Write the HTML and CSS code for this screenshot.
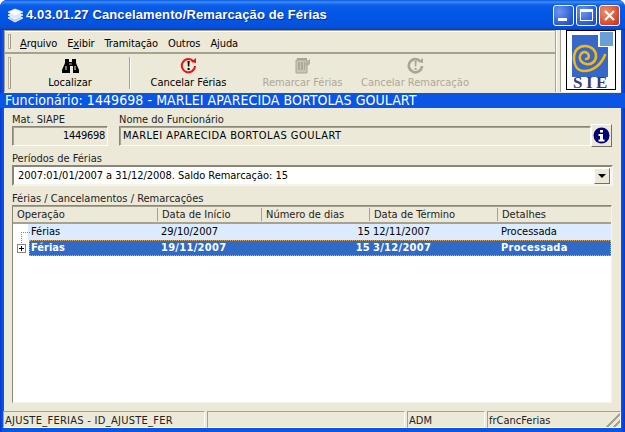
FILE: index.html
```html
<!DOCTYPE html>
<html lang="pt">
<head>
<meta charset="utf-8">
<title>Cancelamento/Remarcação de Férias</title>
<link rel="stylesheet" href="styles.css">
</head>
<body>
<div class="window">
  <header class="titlebar">
    <svg class="app-icon" width="17" height="15" viewBox="0 0 17 15">
      <path d="M1 10l7-3 8 3-8 4z" fill="#b9cfee" stroke="#fff" stroke-width=".8"/>
      <path d="M1 7l7-3 8 3-8 4z" fill="#dbe7f7" stroke="#fff" stroke-width=".8"/>
      <path d="M1 4l7-3 8 3-8 4z" fill="#fff" stroke="#dce8f8" stroke-width=".8"/>
    </svg>
    <span class="title-text">4.03.01.27 Cancelamento/Remarcação de Férias</span>
    <div class="caption-buttons">
      <span class="cap cap-blue"><i class="glyph-min"></i></span>
      <span class="cap cap-blue"><i class="glyph-max"></i></span>
      <span class="cap cap-red">
        <svg width="13" height="13" viewBox="0 0 13 13"><path d="M2 2l9 9M11 2l-9 9" stroke="#fff" stroke-width="2.2"/></svg>
      </span>
    </div>
  </header>

  <div class="client">
    <div class="top">
      <div class="bars">
        <nav class="menubar">
          <span class="grip"></span>
          <span class="menu"><u>A</u>rquivo</span>
          <span class="menu">E<u>x</u>ibir</span>
          <span class="menu">Tramitação</span>
          <span class="menu">Outros</span>
          <span class="menu">A<u>j</u>uda</span>
        </nav>
        <div class="toolbar">
          <span class="grip grip-tall"></span>
          <div class="tool tool-find">
            <svg width="17" height="15" viewBox="0 0 17 15"><path d="M3 1h4v3h3V1h4v4l3 7v3h-6V8H9v0H8v7H0v-3l3-7z" fill="#000"/><path d="M3 8h2v4H3zM12 8h2v4h-2z" fill="#777"/><path d="M7 5h3v2H7z" fill="#555"/></svg>
            <span>Localizar</span>
          </div>
          <span class="tool-sep"></span>
          <div class="tool tool-cancel">
            <svg width="17" height="17" viewBox="0 0 17 17"><path d="M13.500 4.500A6.600 6.600 0 1 0 15 9" fill="none" stroke="#ee0f0f" stroke-width="2"/><path d="M11 5l5 1V1z" fill="#ee0f0f"/><path d="M7.500 4h2.200l-.4 5.600H7.900zM7.600 11h2v2h-2z" fill="#000"/></svg>
            <span>Cancelar Férias</span>
          </div>
          <div class="tool tool-off tool-remark">
            <svg width="17" height="17" viewBox="0 0 17 17"><path d="M2 3h11v13H2z" fill="#c9c6b6" stroke="#a9a697"/><path d="M3 1h10v2H3z" fill="#a9a697"/><path d="M4 6h7M4 8h7M4 10h7M4 12h7" stroke="#8e8c7e" stroke-dasharray="2 1"/><path d="M11 6l5-4v5l-4 3z" fill="#b3b0a0"/></svg>
            <span>Remarcar Férias</span>
          </div>
          <div class="tool tool-off tool-undo">
            <svg width="17" height="17" viewBox="0 0 17 17"><path d="M13.500 4.500A6.600 6.600 0 1 0 15 9" fill="none" stroke="#a9a697" stroke-width="2.600"/><path d="M11 5l5 1V1z" fill="#a9a697"/><path d="M7.500 4h2.200l-.4 5.600H7.900zM7.600 11h2v2h-2z" fill="#a9a697"/></svg>
            <span>Cancelar Remarcação</span>
          </div>
        </div>
      </div>
      <div class="logo-area">
        <div class="logo">
          <svg width="47" height="46" viewBox="0 0 47 46">
            <path d="M4 4H30V16H40V46H4z" fill="#3568c8"/>
            <path d="M32 1H45V15H32z" fill="#6a9ed6"/>
            <path d="M37 24C33 34 25 40 16 40C9 40 6 34 6 27C6 19 11 15 17 15C24 15 28 20 28 25C28 31 23 34 18 33C13 32 11 28 12 25C13 21 17 20 19 22C22 24 21 28 18 28" fill="none" stroke="#f8b90c" stroke-width="2.600" stroke-linecap="round"/>
          </svg>
          <span class="logo-text">SIE</span>
        </div>
      </div>
    </div>

    <div class="banner">Funcionário: 1449698 - MARLEI APARECIDA BORTOLAS GOULART</div>

    <main class="form">
      <div class="row-fields">
        <div class="field field-id">
          <label class="lbl">Mat. SIAPE</label>
          <div class="readonly num">1449698</div>
        </div>
        <div class="field field-name">
          <label class="lbl">Nome do Funcionário</label>
          <div class="name-row">
            <div class="readonly grow upper">MARLEI APARECIDA BORTOLAS GOULART</div>
            <button class="info-btn" type="button" aria-label="Informações">
              <svg width="17" height="17" viewBox="0 0 17 17"><circle cx="8.500" cy="8.500" r="8" fill="#00007b"/><path d="M7 3h3v2.500H7zM5.500 7H10v5.500h1.500V14.500h-6v-2H7V9H5.500z" fill="#fff"/></svg>
            </button>
          </div>
        </div>
      </div>

      <label class="lbl lbl-period">Períodos de Férias</label>
      <div class="select">
        <span class="select-value">2007:01/01/2007 a 31/12/2008. Saldo Remarcação: 15</span>
        <span class="select-btn"><i class="arrow"></i></span>
      </div>

      <label class="lbl lbl-table">Férias / Cancelamentos / Remarcações</label>
      <div class="table">
        <div class="thead grid">
          <span class="th">Operação</span>
          <span class="th">Data de Início</span>
          <span class="th">Número de dias</span>
          <span class="th">Data de Término</span>
          <span class="th th-last">Detalhes</span>
        </div>
        <div class="tbody">
          <div class="tree-lines">
            <i class="dot-v"></i><i class="dot-h1"></i><i class="expander"></i>
          </div>
          <div class="trow grid row-light">
            <span class="td td-op">Férias</span>
            <span class="td td-start">29/10/2007</span>
            <span class="td td-days">15</span>
            <span class="td td-end">12/11/2007</span>
            <span class="td td-det">Processada</span>
          </div>
          <div class="trow grid row-selected">
            <span class="td td-op">Férias</span>
            <span class="td td-start">19/11/2007</span>
            <span class="td td-days">15</span>
            <span class="td td-end">3/12/2007</span>
            <span class="td td-det">Processada</span>
          </div>
        </div>
      </div>
    </main>

    <footer class="status">
      <span class="panel p1">AJUSTE_FERIAS - ID_AJUSTE_FER</span>
      <span class="panel p2"></span>
      <span class="panel p3">ADM</span>
      <span class="panel p4">frCancFerias</span>
    </footer>
  </div>
</div>
</body>
</html>
```
FILE: styles.css
```css
* { box-sizing: border-box; }
html, body { margin: 0; padding: 0; }
body { width: 625px; height: 432px; overflow: hidden; font: 11px/13px "DejaVu Sans Condensed", "DejaVu Sans", sans-serif; color: #000; }

.window {
  width: 625px; height: 432px; display: flex; flex-direction: column;
  padding: 0 4px 4px; border-radius: 7px 7px 0 0;
  background: linear-gradient(90deg, #0838d0 0, #0a55e4 3px, #0a55e4 621px, #0838d0 625px);
}
.titlebar {
  height: 30px; margin: 0 -4px; padding: 0 5px 0 7px; flex: none;
  display: flex; align-items: center; border-radius: 7px 7px 0 0;
  background: linear-gradient(180deg, #0a58e0 0, #3c8cf5 2px, #0a5de8 5px, #0357e6 14px, #0353e0 24px, #0a4ed4 28px, #0438b8 30px);
}
.app-icon { margin: 0 2px 0 0; flex: none; }
.title-text { font: bold 13px/18px "Liberation Sans", Arial, sans-serif; letter-spacing: .12px; color: #fff; text-shadow: 1px 1px 0 #0a2f9c; flex: 1; white-space: nowrap; }
.caption-buttons { display: flex; gap: 2px; }
.cap { width: 21px; height: 21px; border: 1px solid #fff; border-radius: 3px; display: flex; align-items: center; justify-content: center; position: relative; }
.cap-blue { background: radial-gradient(circle at 30% 30%, #6f97ec, #2a5ad8 70%, #1c46c0); }
.cap-red { background: radial-gradient(circle at 30% 30%, #eb8f6e, #d5492a 70%, #b03418); }
.glyph-min { width: 9px; height: 3px; background: #fff; margin: 9px 3px 0 0; display: block; }
.glyph-max { width: 13px; height: 12px; border: 1px solid #fff; border-top-width: 3px; display: block; }

.client { flex: 1; min-height: 0; display: flex; flex-direction: column; background: #ece9d8; }

.top { height: 62px; flex: none; display: flex; background: #fff; }
.bars { width: 552px; flex: none; display: flex; flex-direction: column; background: #ece9d8; border-right: 1px solid #a5a292; border-top: 1px solid #a5a292; border-left: 1px solid #a5a292; }
.menubar { height: 23px; display: flex; align-items: center; padding: 3px 0 0 3px; border-bottom: 2px solid #a5a292; box-shadow: inset 0 1px 0 #fff; flex: none; }
.grip { width: 3px; height: 15px; border: 1px solid #b5b2a2; border-right-color: #9d9a8a; background: #f5f3e8; margin: -3px 9px 0 0; flex: none; }
.grip-tall { height: 32px; margin: 0; }
.menu { margin-right: 10px; letter-spacing: -.1px; white-space: nowrap; }
.menu u { text-decoration: underline; }
.toolbar { flex: 1; min-height: 0; display: flex; align-items: center; padding-left: 3px; }
.tool { display: flex; flex-direction: column; align-items: center; gap: 2px; white-space: nowrap; }
.tool svg { height: 17px; }
.tool-find { width: 118px; }
.tool-sep { width: 1px; height: 32px; background: #a5a292; box-shadow: 1px 0 0 #fff; margin-right: 1px; }
.tool-cancel { width: 115px; }
.tool-remark { width: 113px; }
.tool-undo { width: 112px; }
.tool-off { color: #aca899; }

.logo-area { flex: 1; display: flex; justify-content: flex-end; padding: 0 5px 0 0; border-left: 1px solid #fff; box-shadow: inset 3px 0 0 #ece9d8, inset 4px 0 0 #a5a292; }
.logo { width: 50px; height: 60px; border: 1px solid #000; background: #fff; display: flex; flex-direction: column; align-items: center; }
.logo svg { flex: none; }
.logo-text { font: bold 17px/11px "Liberation Serif", serif; letter-spacing: 3.5px; margin-left: 2px; color: #3a3a78; }

.banner { height: 15px; flex: none; margin: 1px -4px 0; padding: 0 5px; background: #0a55e4; color: #fff; font-size: 14px; line-height: 15px; white-space: nowrap; letter-spacing: .07px; }

.form { flex: 1; min-height: 0; display: flex; flex-direction: column; padding: 5px 9px 8px 8px; }
.lbl { display: block; height: 13px; white-space: nowrap; color: #222; }
.row-fields { display: flex; gap: 11px; height: 34px; flex: none; }
.field-id { width: 96px; flex: none; }
.field-name { flex: 1; min-width: 0; }
.readonly {
  height: 20px; padding: 0 2px 0 3px; line-height: 17px; white-space: nowrap;
  border: 1px solid; border-color: #8a8778 #fff #fff #8a8778; box-shadow: inset 1px 1px 0 #a5a292;
}
.num { text-align: right; letter-spacing: -.3px; }
.upper { letter-spacing: .48px; }
.name-row { display: flex; }
.grow { flex: 1; min-width: 0; }
.info-btn {
  width: 21px; height: 23px; margin-top: -2px; padding: 0; flex: none; display: flex; align-items: center; justify-content: center;
  background: #ece9d8; border: 1px solid; border-color: #fff #716f64 #716f64 #fff;
}
.lbl-period { margin-top: 5px; }
.select {
  height: 21px; flex: none; display: flex; align-items: center; background: #fff; margin-right: -1px; padding: 0 1px 0 4px;
  border: 2px solid; border-color: #8a8778 #f5f4ea #f5f4ea #8a8778;
}
.select-value { flex: 1; white-space: nowrap; letter-spacing: -.04px; }
.select-btn { width: 16px; height: 16px; display: flex; align-items: center; justify-content: center; background: #ece9d8; border: 1px solid; border-color: #fff #716f64 #716f64 #fff; }
.arrow { width: 0; height: 0; border: 4px solid transparent; border-top: 4px solid #000; border-bottom: 0; display: block; }
.lbl-table { margin-top: 6px; }
.table { flex: 1; min-height: 0; background: #fff; border: 1px solid; border-color: #8a8778 #f5f4ea #f5f4ea #8a8778; }
.grid { display: grid; grid-template-columns: 145px 104px 108px 128px 1fr; }
.thead { height: 18px; background: #ece9d8; border-bottom: 2px solid #a5a292; box-shadow: inset 0 1px 0 #a5a292; }
.th { padding: 0 0 0 4px; margin: 2px 0 1px; white-space: nowrap; color: #222; border-right: 1px solid #a5a292; }
.th-last { border-right: 0; }
.tbody { position: relative; }
.trow { height: 16px; line-height: 15px; white-space: nowrap; }
.td-op { padding-left: 18px; }
.td-start { padding-left: 3px; }
.td-days { text-align: right; }
.td-end { padding-left: 3px; }
.td-det { padding-left: 3px; }
.row-light { background: linear-gradient(90deg, #fff 0, #fff 15px, #dcebfd 15px); }
.row-selected { background: linear-gradient(90deg, #fff 0, #fff 16px, #316ac5 16px); color: #fff; font-weight: bold; position: relative; letter-spacing: .3px; }
.row-selected::after { content: ""; position: absolute; left: 16px; right: 0; top: 0; bottom: 0; border: 1px dotted #d8a860; pointer-events: none; }
.row-selected .td-op { letter-spacing: 0; }
.tree-lines { position: absolute; left: 0; top: 0; width: 16px; height: 32px; z-index: 1; }
.dot-v { position: absolute; left: 8px; top: 8px; height: 17px; border-left: 1px dotted #8a8778; }
.dot-h1 { position: absolute; left: 8px; top: 8px; width: 9px; border-top: 1px dotted #8a8778; }
.expander { position: absolute; left: 4px; top: 20px; width: 9px; height: 9px; background: #fff linear-gradient(#000,#000) center/5px 1px no-repeat; border: 1px solid #8a8778; }
.expander::after { content: ""; position: absolute; left: 3px; top: 1px; width: 1px; height: 5px; background: #000; }

.status { height: 17px; flex: none; display: flex; gap: 2px; margin-left: -1px; background: #ece9d8; }
.panel { height: 17px; padding: 0 0 0 1px; line-height: 17px; white-space: nowrap; overflow: hidden; border: 1px solid; border-color: #a5a292 #fff #fff #a5a292; color: #222; }
.p1 { width: 202px; letter-spacing: .28px; }
.p2 { width: 198px; }
.p3 { width: 78px; }
.p4 { flex: 1; background: linear-gradient(135deg, transparent 90%, #a5a292 90%, #a5a292 92%, transparent 92%, transparent 95%, #a5a292 95%, #a5a292 97%, transparent 97%); }
```
